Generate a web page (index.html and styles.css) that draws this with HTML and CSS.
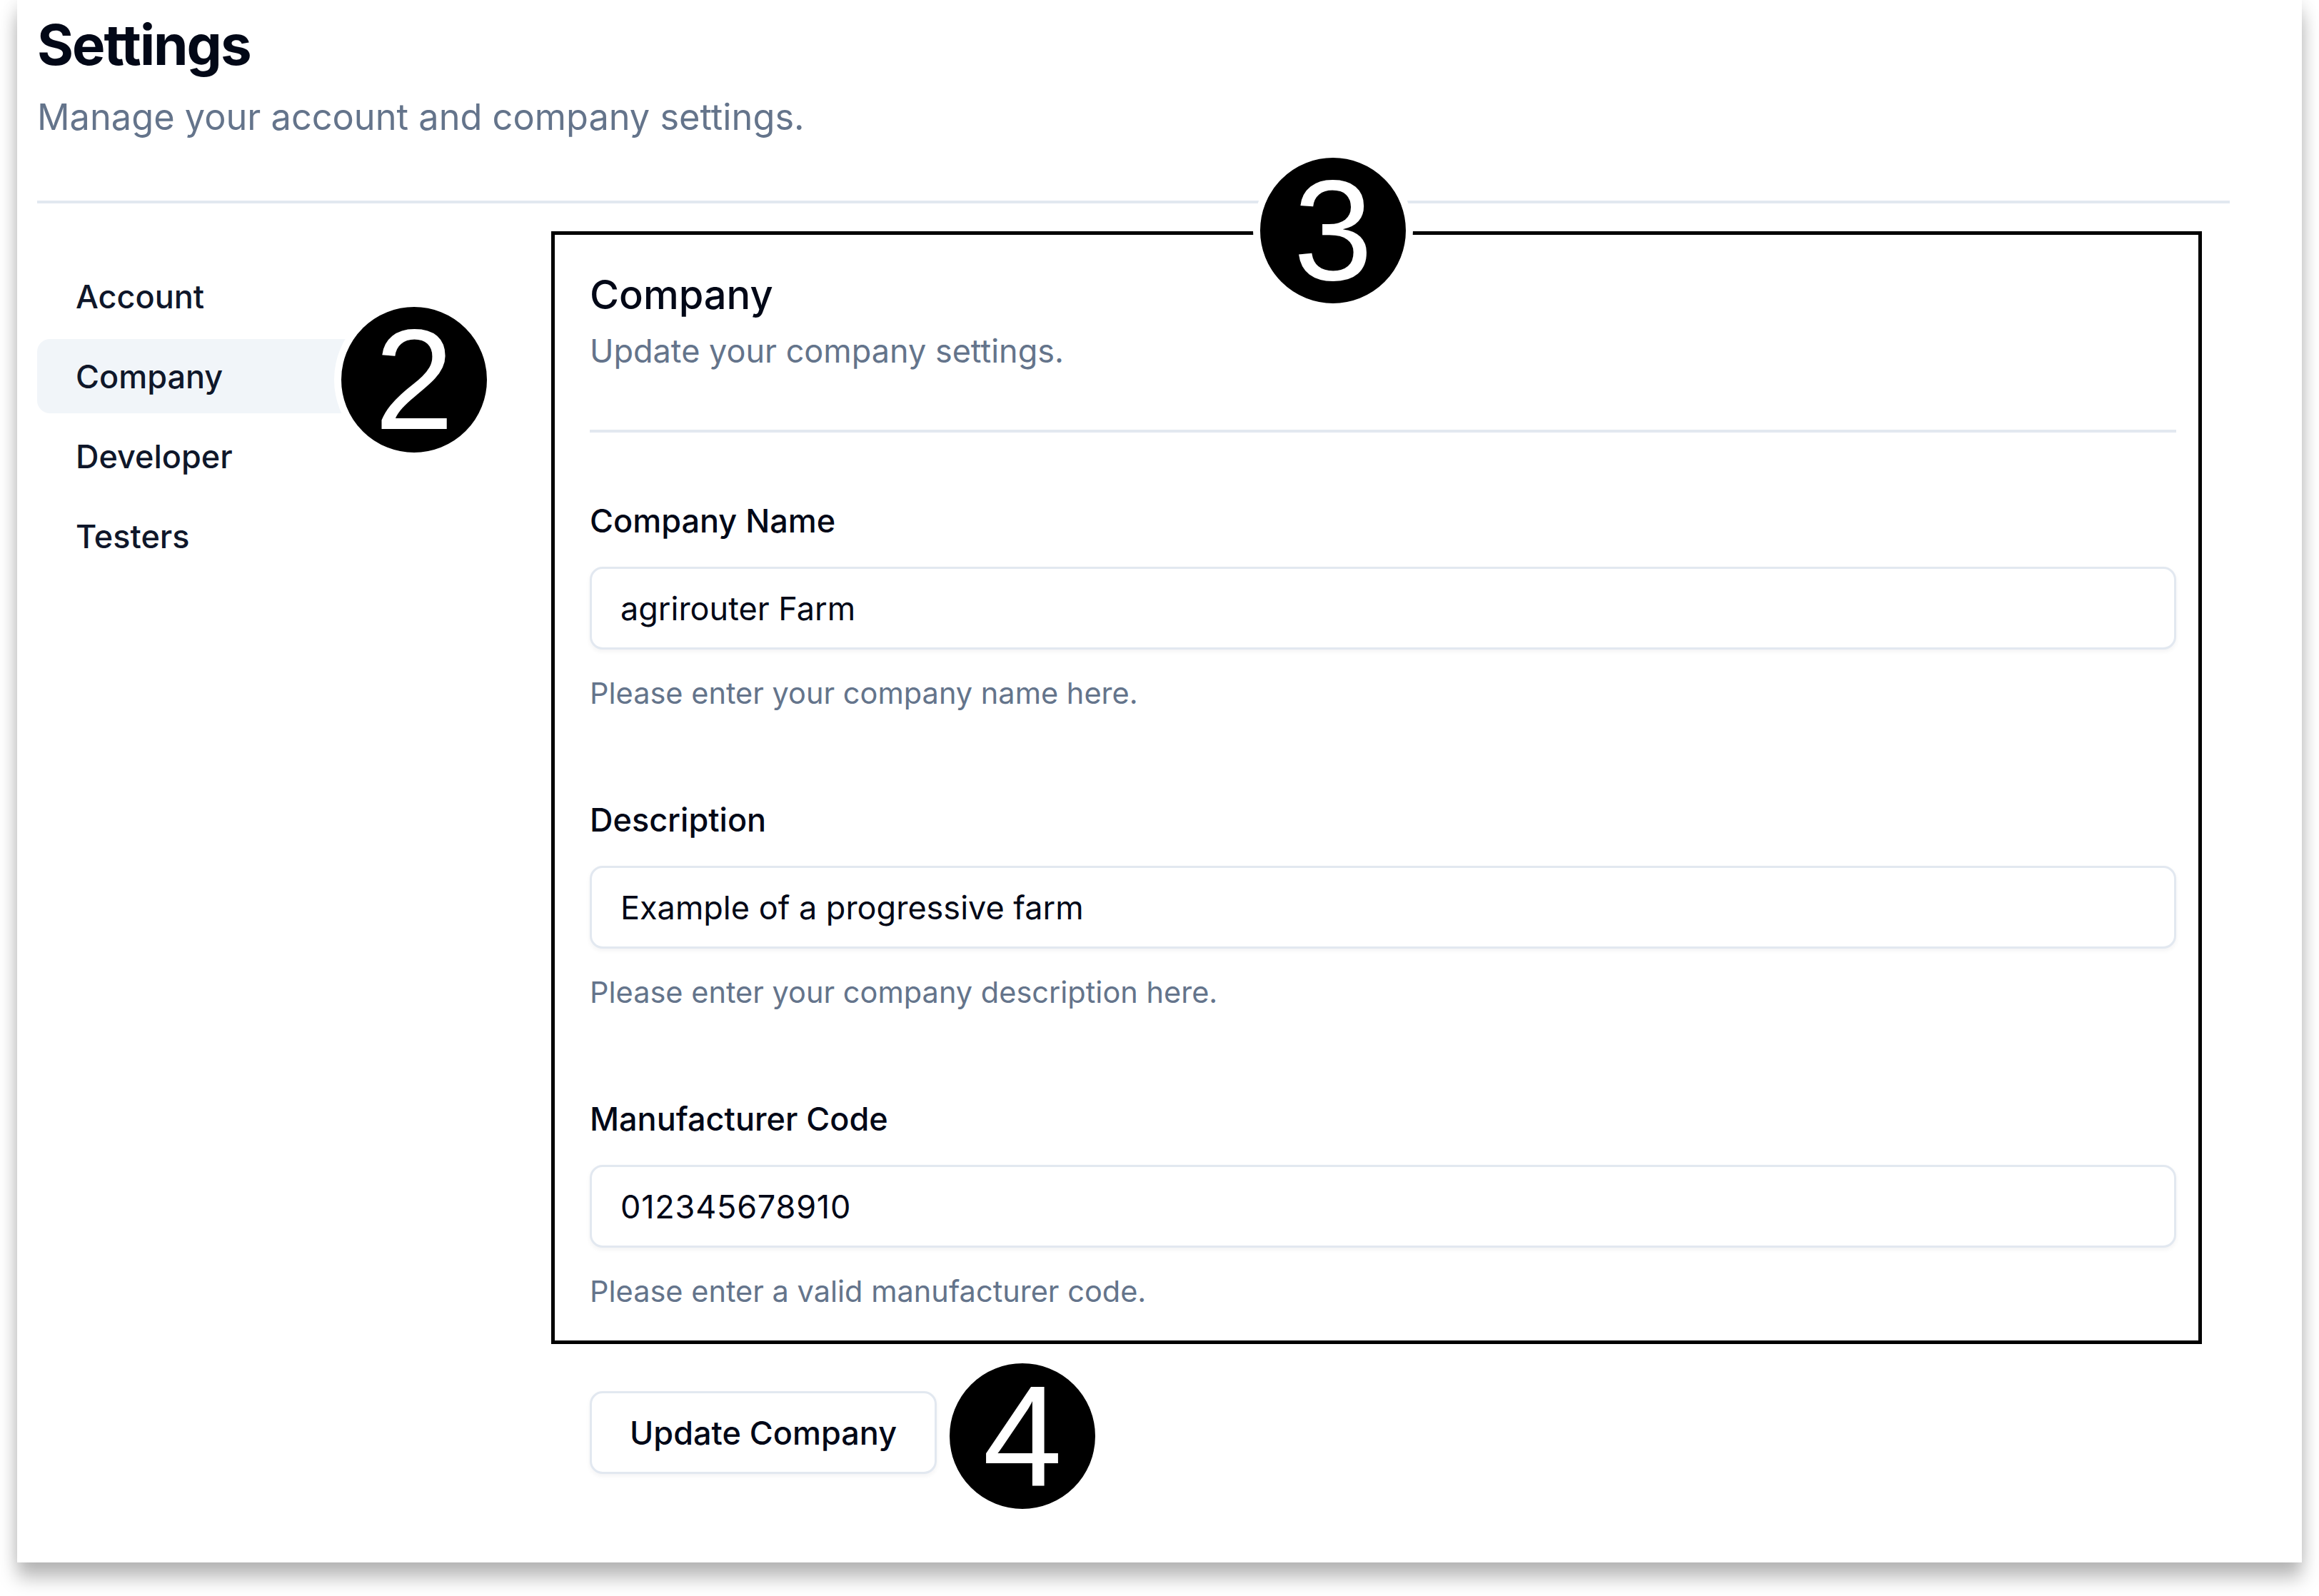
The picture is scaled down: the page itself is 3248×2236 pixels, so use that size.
FILE: index.html
```html
<!DOCTYPE html>
<html lang="en">
<head>
<meta charset="utf-8">
<title>Settings</title>
<link rel="stylesheet" href="styles.css">
</head>
<body>
<div class="window">
  <header class="page-head">
    <h1 class="title">Settings</h1>
    <p class="subtitle">Manage your account and company settings.</p>
  </header>
  <div class="divider"></div>
  <div class="layout">
    <nav class="sidebar">
      <a class="nav-item">Account</a>
      <a class="nav-item active">Company</a>
      <a class="nav-item">Developer</a>
      <a class="nav-item">Testers</a>
    </nav>
    <main class="content">
      <div class="section-head">
        <h2 class="section-title">Company</h2>
        <p class="section-desc">Update your company settings.</p>
      </div>
      <div class="separator"></div>
      <form class="form">
        <div class="field">
          <label class="label">Company Name</label>
          <input class="input" type="text" value="agrirouter Farm">
          <p class="hint">Please enter your company name here.</p>
        </div>
        <div class="field">
          <label class="label">Description</label>
          <input class="input" type="text" value="Example of a progressive farm">
          <p class="hint">Please enter your company description here.</p>
        </div>
        <div class="field">
          <label class="label">Manufacturer Code</label>
          <input class="input input-code" type="text" value="012345678910">
          <p class="hint">Please enter a valid manufacturer code.</p>
        </div>
        <button class="btn" type="button">Update Company</button>
      </form>
    </main>
  </div>
  <div class="annot-box"></div>
  <span class="badge badge-2">2</span>
  <span class="badge badge-3">3</span>
  <span class="badge badge-4">4</span>
</div>
</body>
</html>
```

FILE: styles.css
```css
* { box-sizing: border-box; }

html, body {
  margin: 0;
  padding: 0;
  background: #ffffff;
  overflow: hidden;
}

body {
  width: 3248px;
  height: 2236px;
  font-family: Inter, "Noto Sans", "Liberation Sans", sans-serif;
  color: #020817;
}

.window {
  position: relative;
  margin-left: 24px;
  width: 3200px;
  height: 2189px;
  background: #ffffff;
  padding: 23px 101px 0 28px;
  box-shadow: 0 22px 24px rgba(0, 0, 0, 0.26), 0 0 22px rgba(0, 0, 0, 0.10);
}

.page-head { display: flex; flex-direction: column; }

.title {
  margin: 0;
  font-size: 78px;
  line-height: 80px;
  font-weight: 700;
  letter-spacing: -2px;
  color: #020817;
}

.subtitle {
  margin: 25px 0 0;
  font-size: 50.5px;
  line-height: 72px;
  color: #64748b;
}

.divider {
  margin-top: 81px;
  height: 4px;
  background: #e2e8f0;
}

.layout {
  display: flex;
  margin-top: 78px;
}

.sidebar {
  width: 630px;
  flex: none;
  display: flex;
  flex-direction: column;
  gap: 8px;
}

.nav-item {
  display: flex;
  align-items: center;
  height: 104px;
  padding-left: 54px;
  border-radius: 18px;
  font-size: 45px;
  font-weight: 500;
  color: #0f172a;
}

.nav-item.active { background: #f1f5f9; }

.content {
  margin-left: 144px;
  width: 2222px;
  padding-top: 8px;
}

.section-title {
  margin: 0;
  font-size: 56px;
  line-height: 84px;
  font-weight: 500;
  color: #020817;
}

.section-desc {
  margin: 7px 0 0;
  font-size: 45px;
  line-height: 60px;
  color: #64748b;
}

.separator {
  margin-top: 80px;
  height: 4px;
  background: #e2e8f0;
}

.form {
  margin-top: 94px;
  display: flex;
  flex-direction: column;
  gap: 118px;
}

.field { display: flex; flex-direction: column; }

.label {
  font-size: 45px;
  line-height: 60px;
  font-weight: 500;
  color: #020817;
}

.input {
  margin-top: 34px;
  height: 116px;
  width: 100%;
  padding: 0 40px;
  border: 3px solid #e2e8f0;
  border-radius: 18px;
  background: #ffffff;
  font-family: inherit;
  font-size: 45px;
  color: #020817;
  box-shadow: 0 3px 6px rgba(15, 23, 42, 0.05);
  outline: none;
}

.input-code { letter-spacing: 0.8px; }

.hint {
  margin: 31px 0 0;
  font-size: 41.5px;
  line-height: 60px;
  color: #64748b;
}

.btn {
  align-self: flex-start;
  margin-top: -8px;
  height: 116px;
  padding: 0 53px;
  border: 3px solid #e2e8f0;
  border-radius: 18px;
  background: #ffffff;
  font-family: inherit;
  font-size: 45px;
  font-weight: 500;
  color: #020817;
  box-shadow: 0 3px 6px rgba(15, 23, 42, 0.05);
}

.annot-box {
  position: absolute;
  left: 748px;
  top: 324px;
  width: 2312px;
  height: 1559px;
  border: 5px solid #000000;
  pointer-events: none;
}

.badge {
  position: absolute;
  width: 224px;
  height: 224px;
  margin: -112px 0 0 -112px;
  border-radius: 50%;
  background: #000000;
  border: 10px solid #ffffff;
  display: flex;
  align-items: center;
  justify-content: center;
  font-family: "Liberation Sans", Arial, sans-serif;
  font-size: 200px;
  line-height: 1;
  color: #ffffff;
}

.badge-2 { left: 556px; top: 532px; }
.badge-3 { left: 1843px; top: 323px; }
.badge-4 { left: 1408px; top: 2012px; }
```
